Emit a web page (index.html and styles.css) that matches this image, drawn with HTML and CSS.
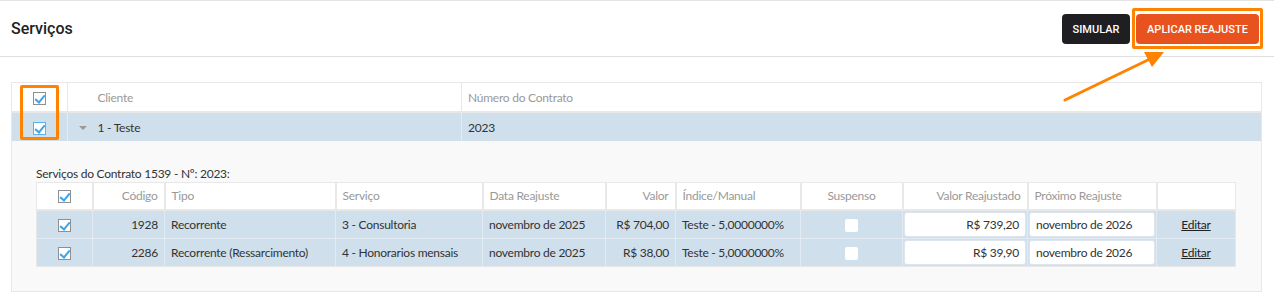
FILE: index.html
```html
<!DOCTYPE html>
<html lang="pt-BR">
<head>
  <meta charset="UTF-8">
  <title>Serviços</title>
  <link rel="stylesheet" href="styles.css">
</head>
<body>
  <div id="header">
    <h2 id="title">Serviços</h2>
    <div class="actions">
      <button class="btn btn-dark">SIMULAR</button>
      <button class="btn btn-orange">APLICAR REAJUSTE</button>
    </div>
  </div>

  <div id="content">
    <table class="contracts">
      <colgroup>
        <col class="c-check">
        <col class="c-caret">
        <col class="c-client">
        <col>
      </colgroup>
      <thead>
        <tr>
          <th class="cell-check"><span class="check"></span></th>
          <th class="no-sep"></th>
          <th>Cliente</th>
          <th>Número do Contrato</th>
        </tr>
      </thead>
      <tbody>
        <tr class="selected">
          <td class="cell-check"><span class="check blue"></span></td>
          <td class="no-sep"><span class="caret"></span></td>
          <td>1 - Teste</td>
          <td>2023</td>
        </tr>
        <tr class="detail">
          <td colspan="4">
            <div class="detail-box">
              <div class="caption">Serviços do Contrato 1539 - Nº: 2023:</div>
              <table class="services">
                <colgroup>
                  <col style="width:56px">
                  <col style="width:72px">
                  <col style="width:171px">
                  <col style="width:147px">
                  <col style="width:123px">
                  <col style="width:70px">
                  <col style="width:125px">
                  <col style="width:102px">
                  <col style="width:125px">
                  <col style="width:129px">
                  <col>
                </colgroup>
                <thead>
                  <tr>
                    <th class="center"><span class="check"></span></th>
                    <th class="right">Código</th>
                    <th>Tipo</th>
                    <th>Serviço</th>
                    <th>Data Reajuste</th>
                    <th class="right">Valor</th>
                    <th>Índice/Manual</th>
                    <th class="center">Suspenso</th>
                    <th class="right">Valor Reajustado</th>
                    <th>Próximo Reajuste</th>
                    <th></th>
                  </tr>
                </thead>
                <tbody>
                  <tr>
                    <td class="center"><span class="check"></span></td>
                    <td class="right">1928</td>
                    <td>Recorrente</td>
                    <td>3 - Consultoria</td>
                    <td>novembro de 2025</td>
                    <td class="right">R$ 704,00</td>
                    <td>Teste - 5,0000000%</td>
                    <td class="center"><span class="box"></span></td>
                    <td class="input-cell"><div class="input right">R$ 739,20</div></td>
                    <td class="input-cell"><div class="input">novembro de 2026</div></td>
                    <td class="center"><a href="#">Editar</a></td>
                  </tr>
                  <tr>
                    <td class="center"><span class="check"></span></td>
                    <td class="right">2286</td>
                    <td>Recorrente (Ressarcimento)</td>
                    <td>4 - Honorarios mensais</td>
                    <td>novembro de 2025</td>
                    <td class="right">R$ 38,00</td>
                    <td>Teste - 5,0000000%</td>
                    <td class="center"><span class="box"></span></td>
                    <td class="input-cell"><div class="input right">R$ 39,90</div></td>
                    <td class="input-cell"><div class="input">novembro de 2026</div></td>
                    <td class="center"><a href="#">Editar</a></td>
                  </tr>
                </tbody>
              </table>
            </div>
          </td>
        </tr>
      </tbody>
    </table>
  </div>

  <!-- annotation overlays -->
  <div class="mark mark-checks"></div>
  <div class="mark mark-button"></div>
  <svg class="arrow" width="120" height="70" viewBox="0 0 120 70">
    <line x1="5" y1="62" x2="92" y2="20" stroke="#ff8200" stroke-width="3" stroke-linecap="round"/>
    <polygon points="104,14 84,14 92,29" fill="#ff8200"/>
  </svg>
</body>
</html>
```

FILE: styles.css
```css
body {
  margin: 0;
  font-family: 'Lato', 'Open Sans', sans-serif;
  font-size: 12px;
  letter-spacing: -0.25px;
  color: #333;
  background-color: #fff;
  position: relative;
  width: 1274px;
  height: 295px;
  overflow: hidden;
}
#header {
  display: flex;
  justify-content: space-between;
  align-items: center;
  height: 55px;
  padding: 0 15px 0 11px;
  border-top: 1px solid #e3e3e3;
  border-bottom: 1px solid #e0e0e0;
}
#title {
  margin: 0;
  font-family: 'Roboto', sans-serif;
  font-weight: 500;
  font-size: 16px;
  letter-spacing: 0;
  color: #222;
}
.actions {
  display: flex;
  gap: 6px;
  margin-top: 1px;
}
.btn {
  font-family: 'Roboto', sans-serif;
  font-weight: 500;
  font-size: 11px;
  letter-spacing: 0;
  color: #fff;
  border: none;
  border-radius: 4px;
  height: 30px;
  padding: 0;
  white-space: nowrap;
  cursor: pointer;
}
.btn-dark {
  background-color: #1e1e23;
  width: 68px;
}
.btn-orange {
  background-color: #e8521f;
  width: 123px;
}
#content {
  padding: 25px 12px 0 11px;
}
table {
  border-collapse: collapse;
  width: 100%;
}
.contracts {
  border: 1px solid #e8e8e8;
  table-layout: fixed;
}
.c-check { width: 56px; }
.c-caret { width: 24px; }
.c-client { width: 370px; }
.contracts > thead > tr > th,
.contracts > tbody > tr > td {
  height: 28px;
  padding: 0 6px;
  text-align: left;
  font-weight: normal;
  border-left: 1px solid #e8e8e8;
}
.contracts > thead > tr > th {
  color: #999;
  border-bottom: 2px solid #e8e8e8;
}
.contracts .no-sep + th,
.contracts .no-sep + td {
  border-left: none;
}
.contracts .cell-check {
  text-align: center;
  padding: 0;
}
.contracts > tbody > tr.selected > td {
  background-color: #d0dfec;
  border-left-color: #e3ecf4;
}
.contracts > tbody > tr.selected > td.cell-check {
  border-left: none;
}
.contracts > tbody > tr.detail > td {
  height: auto;
  padding: 0;
  border-left: none;
}
.caret {
  display: inline-block;
  width: 0;
  height: 0;
  border-left: 4px solid transparent;
  border-right: 4px solid transparent;
  border-top: 4px solid #999;
  margin-left: 5px;
  vertical-align: middle;
}
.detail-box {
  background-color: #f9f9f9;
  padding: 25px 25px 24px 24px;
}
.caption {
  line-height: 16px;
}
.services {
  table-layout: fixed;
  border: 1px solid #e8e8e8;
}
.services th,
.services td {
  height: 27px;
  padding: 0 6px;
  text-align: left;
  font-weight: normal;
  white-space: nowrap;
  box-sizing: border-box;
}
.services th {
  background-color: #fff;
  color: #999;
  height: 27px;
  border-left: 2px solid #e8e8e8;
  border-bottom: 2px solid #e8e8e8;
}
.services th:first-child {
  border-left: none;
}
.services td {
  background-color: #d0dfec;
  border-left: 1px solid #e2ebf3;
  border-top: 1px solid #e2ebf3;
}
.services td:first-child {
  border-left: none;
}
.services .right { text-align: right; }
.services .center { text-align: center; }
.services td.input-cell {
  padding: 1px;
}
.input {
  background-color: #fff;
  border: 1px solid #dde6ee;
  border-radius: 3px;
  height: 23px;
  line-height: 23px;
  padding: 0 6px;
}
.services a {
  color: #222;
  text-decoration: underline;
}
.check {
  display: inline-block;
  width: 11px;
  height: 11px;
  border: 1px solid #8f8f8f;
  background-color: #fff;
  vertical-align: middle;
  position: relative;
}
.check.blue {
  border-color: #5fb1ec;
}
.check::after {
  content: "";
  position: absolute;
  left: 3px;
  top: 0;
  width: 4px;
  height: 8px;
  border-right: 2px solid #39a5f2;
  border-bottom: 2px solid #39a5f2;
  transform: rotate(40deg);
}
.box {
  display: inline-block;
  width: 13px;
  height: 13px;
  border-radius: 2px;
  background-color: #fff;
  vertical-align: middle;
}
.mark {
  position: absolute;
  border: 3px solid #ff8200;
  border-radius: 2px;
}
.mark-checks {
  left: 20px;
  top: 85px;
  width: 33px;
  height: 49px;
}
.mark-button {
  left: 1132px;
  top: 8px;
  width: 125px;
  height: 35px;
}
.arrow {
  position: absolute;
  left: 1060px;
  top: 38px;
}
```
